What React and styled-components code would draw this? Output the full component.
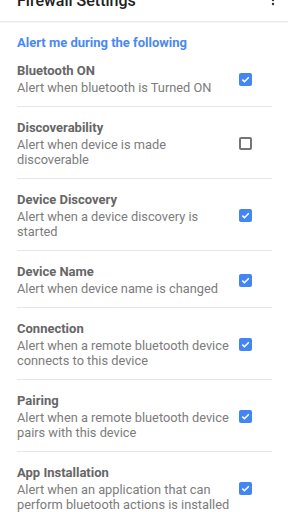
import React from "react";
import styled, { createGlobalStyle } from "styled-components";

const GlobalStyle = createGlobalStyle`
  html, body {
    margin: 0;
    padding: 0;
    background: #ffffff;
    font-family: Roboto, "Noto Sans", "Liberation Sans", sans-serif;
  }
  * {
    box-sizing: border-box;
  }
`;

const items = [
  { title: "Bluetooth ON", summary: "Alert when bluetooth is Turned ON", checked: true },
  { title: "Discoverability", summary: "Alert when device is made discoverable", checked: false },
  { title: "Device Discovery", summary: "Alert when a device discovery is started", checked: true },
  { title: "Device Name", summary: "Alert when device name is changed", checked: true },
  { title: "Connection", summary: "Alert when a remote bluetooth device connects to this device", checked: true },
  { title: "Pairing", summary: "Alert when a remote bluetooth device pairs with this device", checked: true },
  {
    title: "App Installation",
    summary: "Alert when an application that can perform bluetooth actions is installed",
    checked: true,
  },
];

const Screen = styled.div`
  width: 288px;
  height: 512px;
  overflow: hidden;
  background: #ffffff;
`;

const Toolbar = styled.header`
  height: 22px;
  display: flex;
  align-items: flex-end;
  justify-content: space-between;
  padding: 0 13px 10px 17px;
  overflow: hidden;
  border-bottom: 1px solid #e9e9e9;
  box-shadow: 0 1px 1px rgba(0, 0, 0, 0.03);
`;

const Title = styled.h1`
  margin: 0;
  font-size: 16px;
  line-height: 20px;
  font-weight: 500;
  color: #212121;
  white-space: nowrap;
`;

const MenuButton = styled.div`
  display: flex;
  margin-bottom: 3px;
`;

const Content = styled.main`
  padding: 0 16px 0 17px;
`;

const SectionHeader = styled.h2`
  margin: 0;
  padding-top: 13px;
  font-size: 13px;
  line-height: 15px;
  font-weight: 700;
  color: #4a89f3;
`;

const Row = styled.div`
  display: flex;
  align-items: center;
  padding: 13px 0 ${(p) => (p.$last ? "12px" : "11px")};
  border-bottom: ${(p) => (p.$last ? "none" : "1px solid #e6e6e6")};
`;

const Texts = styled.div`
  flex: 1;
  min-width: 0;
`;

const RowTitle = styled.div`
  font-size: 13px;
  line-height: 15px;
  font-weight: 700;
  color: #666666;
  margin-bottom: 2px;
`;

const Summary = styled.div`
  font-size: 12.8px;
  line-height: 15px;
  color: #7c7c7c;
`;

const Box = styled.span`
  flex: none;
  width: 13px;
  height: 13px;
  margin: 0 20px 0 3px;
  border-radius: 2px;
  display: flex;
  align-items: center;
  justify-content: center;
  background: ${(p) => (p.$checked ? "#4285f4" : "transparent")};
  border: ${(p) => (p.$checked ? "none" : "2px solid #757575")};
`;

const Check = ({ checked }) => (
  <Box $checked={checked}>
    {checked && (
      <svg width="9" height="9" viewBox="0 0 9 9">
        <path d="M1.3 4.6 L3.5 6.7 L7.8 2.3" fill="none" stroke="#ffffff" strokeWidth="1.6" />
      </svg>
    )}
  </Box>
);

export default function App() {
  return (
    <>
      <GlobalStyle />
      <Screen>
        <Toolbar>
          <Title>Firewall Settings</Title>
          <MenuButton>
            <svg width="4" height="14" viewBox="0 0 4 14">
              <circle cx="2" cy="2" r="1.2" fill="#333" />
              <circle cx="2" cy="6" r="1.2" fill="#333" />
              <circle cx="2" cy="10" r="1.2" fill="#333" />
            </svg>
          </MenuButton>
        </Toolbar>
        <Content>
          <SectionHeader>Alert me during the following</SectionHeader>
          {items.map((it, i) => (
            <Row key={it.title} $last={i === items.length - 1}>
              <Texts>
                <RowTitle>{it.title}</RowTitle>
                <Summary>{it.summary}</Summary>
              </Texts>
              <Check checked={it.checked} />
            </Row>
          ))}
        </Content>
      </Screen>
    </>
  );
}
